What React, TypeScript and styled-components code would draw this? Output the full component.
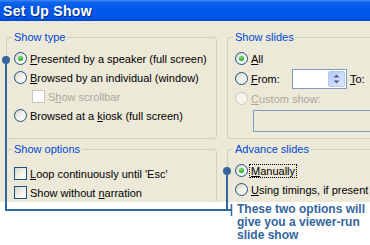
import styled, { createGlobalStyle } from 'styled-components';
import { ReactNode } from 'react';

const GlobalStyle = createGlobalStyle`
  html, body {
    margin: 0;
    padding: 0;
    background: #ffffff;
  }
  body {
    font-family: "Liberation Sans", Arial, sans-serif;
    font-size: 11px;
  }
`;

const Screen = styled.div`
    position: relative;
    width: 370px;
    height: 245px;
    overflow: hidden;
    background: #ffffff;
`;

const TitleBar = styled.div`
    height: 21px;
    display: flex;
    align-items: center;
    padding-left: 3px;
    background: linear-gradient(#3d8bf7 0%, #0f62ea 12%, #0058ea 45%, #0055e4 85%, #0048cc 100%);
`;

const Title = styled.span`
    font-family: "Liberation Sans", Arial, sans-serif;
    font-weight: bold;
    font-size: 14px;
    color: #ffffff;
    text-shadow: 1px 1px 0 #0a2a7a;
    letter-spacing: 0.3px;
`;

const Body = styled.div`
    height: 181px;
    box-sizing: border-box;
    overflow: hidden;
    background: #ece9d8;
    padding: 10px 0 0 6px;
    display: grid;
    grid-template-columns: 211px 170px;
    grid-template-rows: 108px 1fr;
    column-gap: 10px;
    row-gap: 4px;
`;

const Group = styled.fieldset<{ $padTop?: number }>`
    margin: 0;
    min-width: 0;
    border: 1px solid #d0d0bf;
    border-radius: 3px;
    padding: ${({ $padTop }) => $padTop ?? 5}px 7px 0 7px;
    display: flex;
    flex-direction: column;
`;

const Legend = styled.legend`
    color: #0046d5;
    font-size: 11px;
    line-height: 13px;
    padding: 0 2px;
    margin-left: -2px;
`;

const Row = styled.div<{ $indent?: number; $height?: number }>`
    display: flex;
    align-items: center;
    gap: 3px;
    height: ${({ $height }) => $height ?? 19}px;
    padding-left: ${({ $indent }) => $indent ?? 0}px;
    color: #000000;
    white-space: nowrap;
`;

const Label = styled.span<{ $disabled?: boolean; $focus?: boolean; $width?: number }>`
    color: ${({ $disabled }) => $disabled ? '#aca899' : '#000000'};
    ${({ $width }) => $width ? `width: ${$width}px;` : ''}
    ${({ $focus }) => $focus ? `
        outline: 1px dotted #000000;
        outline-offset: 0;
        padding: 0 1px;
        margin-left: -1px;
    ` : ''}
`;

const RadioDot = styled.span<{ $checked?: boolean; $disabled?: boolean }>`
    flex: none;
    width: 13px;
    height: 13px;
    box-sizing: border-box;
    border-radius: 50%;
    border: 1px solid ${({ $disabled }) => $disabled ? '#cac8bb' : '#1c5180'};
    background: ${({ $disabled }) => $disabled
        ? '#f4f3ee'
        : 'linear-gradient(135deg, #d6d4c8 0%, #f1f0ea 50%, #ffffff 100%)'};
    display: flex;
    align-items: center;
    justify-content: center;

    &::after {
        content: '';
        display: ${({ $checked }) => $checked ? 'block' : 'none'};
        width: 5px;
        height: 5px;
        border-radius: 50%;
        background: radial-gradient(circle at 40% 35%, #7ee27e 0%, #2cb52c 55%, #1a8f1a 100%);
    }
`;

const CheckBox = styled.span<{ $disabled?: boolean }>`
    flex: none;
    width: 13px;
    height: 13px;
    box-sizing: border-box;
    border: 1px solid ${({ $disabled }) => $disabled ? '#cac8bb' : '#1c5180'};
    background: ${({ $disabled }) => $disabled
        ? '#ffffff'
        : 'linear-gradient(135deg, #d6d4c8 0%, #f1f0ea 50%, #ffffff 100%)'};
`;

const SpinBox = styled.div`
    display: flex;
    justify-content: flex-end;
    width: 55px;
    height: 20px;
    box-sizing: border-box;
    border: 1px solid #7f9db9;
    background: #ffffff;
    padding: 1px;
`;

const SpinButtons = styled.div`
    width: 17px;
    height: 100%;
    border-radius: 2px;
    background: linear-gradient(135deg, #b6cbf8 0%, #cfdcfd 60%, #dde7fe 100%);
    border: 1px solid #b5c8f3;
    box-sizing: border-box;
    display: flex;
    align-items: center;
    justify-content: center;
`;

const TextBox = styled.div`
    height: 22px;
    box-sizing: border-box;
    border: 1px solid #7f9db9;
    background: #ece9d8;
    margin: 2px 0 0 18px;
    width: 200px;
`;

const Overlay = styled.svg`
    position: absolute;
    left: 0;
    top: 0;
    pointer-events: none;
`;

const Callout = styled.div`
    position: absolute;
    left: 237px;
    top: 203px;
    width: 135px;
    font-family: "Liberation Sans", Arial, sans-serif;
    font-weight: bold;
    font-size: 12px;
    line-height: 13px;
    color: #33669c;
`;

interface OptionProps {
    kind: 'radio' | 'check';
    checked?: boolean;
    disabled?: boolean;
    focus?: boolean;
    indent?: number;
    children: ReactNode;
}

const Option = ({ kind, checked, disabled, focus, indent, children }: OptionProps) => (
    <Row $indent={indent}>
        {kind === 'radio'
            ? <RadioDot $checked={checked} $disabled={disabled} />
            : <CheckBox $disabled={disabled} />}
        <Label $disabled={disabled} $focus={focus}>{children}</Label>
    </Row>
);

const SpinArrows = () => (
    <svg width="7" height="10" viewBox="0 0 7 10">
        <path d="M3.5 0.5 L6.5 3.5 L0.5 3.5 Z" fill="#4d6185" />
        <path d="M3.5 9.5 L6.5 6.5 L0.5 6.5 Z" fill="#4d6185" />
    </svg>
);

export default function App() {
    return (
        <>
            <GlobalStyle />
            <Screen>
                <TitleBar>
                    <Title>Set Up Show</Title>
                </TitleBar>
                <Body>
                    <Group>
                        <Legend>Show type</Legend>
                        <Option kind="radio" checked><u>P</u>resented by a speaker (full screen)</Option>
                        <Option kind="radio"><u>B</u>rowsed by an individual (window)</Option>
                        <Option kind="check" disabled indent={18}>S<u>h</u>ow scrollbar</Option>
                        <Option kind="radio">Browsed at a <u>k</u>iosk (full screen)</Option>
                    </Group>
                    <Group>
                        <Legend>Show slides</Legend>
                        <Option kind="radio" checked><u>A</u>ll</Option>
                        <Row $height={21}>
                            <RadioDot />
                            <Label $width={38}><u>F</u>rom:</Label>
                            <SpinBox>
                                <SpinButtons><SpinArrows /></SpinButtons>
                            </SpinBox>
                            <Label><u>T</u>o:</Label>
                        </Row>
                        <Option kind="radio" disabled><u>C</u>ustom show:</Option>
                        <TextBox />
                    </Group>
                    <Group $padTop={8}>
                        <Legend>Show options</Legend>
                        <Option kind="check"><u>L</u>oop continuously until 'Esc'</Option>
                        <Option kind="check">Show without <u>n</u>arration</Option>
                    </Group>
                    <Group>
                        <Legend>Advance slides</Legend>
                        <Option kind="radio" checked focus><u>M</u>anually</Option>
                        <Option kind="radio"><u>U</u>sing timings, if present</Option>
                    </Group>
                </Body>
                <Overlay width="370" height="245" viewBox="0 0 370 245">
                    <circle cx="6" cy="60" r="4" fill="#33669c" />
                    <path d="M6 60 V210 H232" stroke="#33669c" strokeWidth="2" fill="none" />
                    <circle cx="227" cy="171" r="4" fill="#33669c" />
                    <path d="M227 171 V210" stroke="#33669c" strokeWidth="2" fill="none" />
                    <path d="M231.5 204 V216" stroke="#33669c" strokeWidth="1.5" fill="none" />
                </Overlay>
                <Callout>
                    These two options will<br />
                    give you a viewer-run<br />
                    slide show
                </Callout>
            </Screen>
        </>
    );
}
